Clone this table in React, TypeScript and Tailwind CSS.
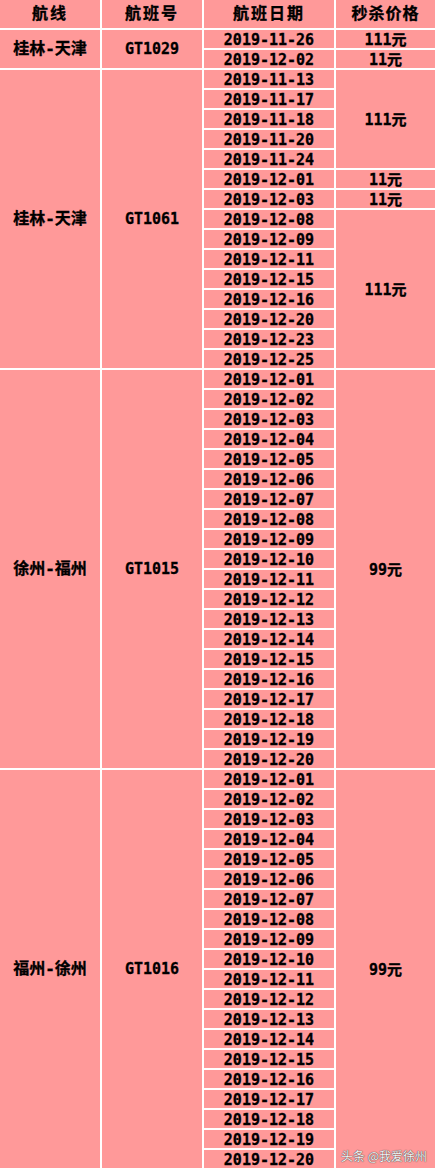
import React from "react";

// Flash-sale fares table: route / flight / date / price, on a pink sheet
// with white grid lines.

type Group = {
  route: string;
  flight: string;
  dates: string[];
  // price blocks, each spanning `span` consecutive dates
  prices: { label: string; span: number }[];
};

const december = (n: number) =>
  Array.from({ length: n }, (_, i) => `2019-12-${String(i + 1).padStart(2, "0")}`);

const GROUPS: Group[] = [
  {
    route: "桂林-天津",
    flight: "GT1029",
    dates: ["2019-11-26", "2019-12-02"],
    prices: [
      { label: "111元", span: 1 },
      { label: "11元", span: 1 },
    ],
  },
  {
    route: "桂林-天津",
    flight: "GT1061",
    dates: [
      "2019-11-13", "2019-11-17", "2019-11-18", "2019-11-20", "2019-11-24",
      "2019-12-01", "2019-12-03", "2019-12-08", "2019-12-09", "2019-12-11",
      "2019-12-15", "2019-12-16", "2019-12-20", "2019-12-23", "2019-12-25",
    ],
    prices: [
      { label: "111元", span: 5 },
      { label: "11元", span: 1 },
      { label: "11元", span: 1 },
      { label: "111元", span: 8 },
    ],
  },
  { route: "徐州-福州", flight: "GT1015", dates: december(20), prices: [{ label: "99元", span: 20 }] },
  { route: "福州-徐州", flight: "GT1016", dates: december(20), prices: [{ label: "99元", span: 20 }] },
];

const cell =
  "bg-[#ff9999] flex items-center justify-center text-black font-bold [-webkit-text-stroke:0.3px_black]";

export default function App() {
  const cells: React.ReactNode[] = [];
  let row = 2;

  GROUPS.forEach((g, gi) => {
    const n = g.dates.length;
    cells.push(
      <div key={`r${gi}`} className={`${cell} col-start-1 text-[16px]`} style={{ gridRow: `${row} / span ${n}` }}>
        {g.route}
      </div>,
      <div key={`f${gi}`} className={`${cell} col-start-2 text-[15px]`} style={{ gridRow: `${row} / span ${n}` }}>
        {g.flight}
      </div>
    );
    g.dates.forEach((d, di) => {
      cells.push(
        <div key={`d${gi}-${di}`} className={`${cell} col-start-3 text-[15px] leading-none pt-[2px]`} style={{ gridRow: row + di }}>
          {d}
        </div>
      );
    });
    let pr = row;
    g.prices.forEach((p, pi) => {
      cells.push(
        <div key={`p${gi}-${pi}`} className={`${cell} col-start-4 text-[15px] leading-none pt-[2px]`} style={{ gridRow: `${pr} / span ${p.span}` }}>
          {p.label}
        </div>
      );
      pr += p.span;
    });
    row += n;
  });

  return (
    <div className="w-[437px] h-[1170px] bg-white overflow-hidden font-['DejaVu_Sans_Mono','Noto_Sans_CJK_SC',monospace]">
      <div className="relative grid grid-cols-[100px_100px_130px_99px] grid-rows-[28px_repeat(57,18px)] gap-[2px] pr-[2px] pb-[2px] bg-white">
        <div className={`${cell} text-[16px] tracking-[2px]`}>航线</div>
        <div className={`${cell} text-[16px] tracking-[2px]`}>航班号</div>
        <div className={`${cell} text-[16px] tracking-[2px]`}>航班日期</div>
        <div className={`${cell} text-[16px] tracking-[1px]`}>秒杀价格</div>
        {cells}
        <span className="absolute right-[10px] bottom-[8px] text-[12px] leading-none text-[#f4f4f4] font-['Noto_Sans_CJK_SC',sans-serif] [text-shadow:0_0_1px_#444,0_0_1px_#444]">
          头条 @我爱徐州
        </span>
      </div>
    </div>
  );
}
